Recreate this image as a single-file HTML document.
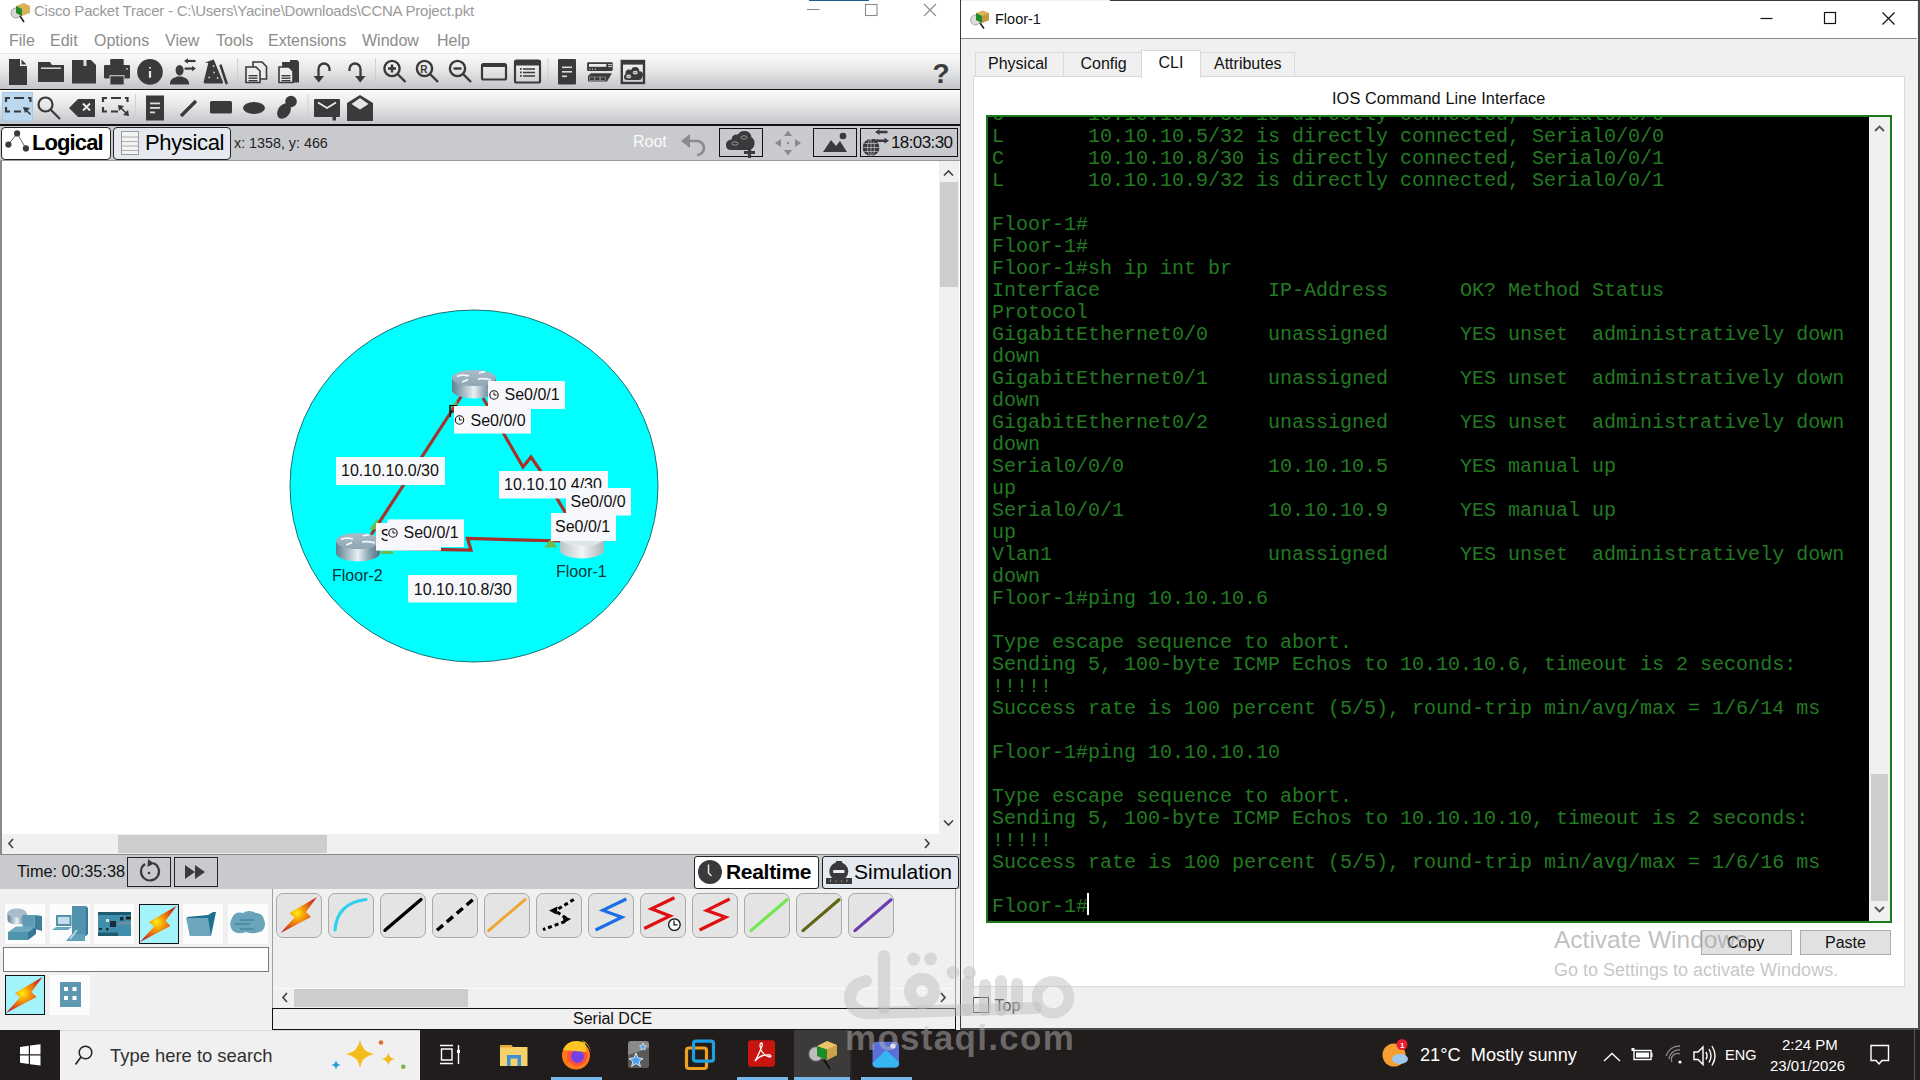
<!DOCTYPE html>
<html><head><meta charset="utf-8">
<style>
*{margin:0;padding:0;box-sizing:border-box}
html,body{width:1920px;height:1080px;overflow:hidden;background:#fff;font-family:"Liberation Sans",sans-serif}
.a{position:absolute}
.t{position:absolute;white-space:pre;line-height:1}
.tb{background:linear-gradient(#fbfbfb,#e6e7e8 45%,#c3c5c8)}
.ico{position:absolute}
</style></head><body>

<!-- ================= LEFT WINDOW ================= -->
<div class="a" id="lw" style="left:0;top:0;width:960px;height:1030px;background:#fff;overflow:hidden">
  <!-- title -->
  <div class="a" style="left:809px;top:0;width:60px;height:1px;background:#1f5f8b"></div>
  <div class="t" style="left:34px;top:3px;font-size:15px;letter-spacing:-0.22px;color:#9a9a9a">Cisco Packet Tracer - C:\Users\Yacine\Downloads\CCNA Project.pkt</div>
  <!-- menu -->
  <div class="t" style="left:9px;top:33px;font-size:16px;color:#8c8c8c;word-spacing:0">File</div>
  <div class="t" style="left:50px;top:33px;font-size:16px;color:#8c8c8c">Edit</div>
  <div class="t" style="left:94px;top:33px;font-size:16px;color:#8c8c8c">Options</div>
  <div class="t" style="left:165px;top:33px;font-size:16px;color:#8c8c8c">View</div>
  <div class="t" style="left:216px;top:33px;font-size:16px;color:#8c8c8c">Tools</div>
  <div class="t" style="left:268px;top:33px;font-size:16px;color:#8c8c8c">Extensions</div>
  <div class="t" style="left:362px;top:33px;font-size:16px;color:#8c8c8c">Window</div>
  <div class="t" style="left:437px;top:33px;font-size:16px;color:#8c8c8c">Help</div>
  <div class="a" style="left:0;top:53px;width:960px;height:1px;background:#e8e8e8"></div>
  <!-- toolbar 1 -->
  <div class="a tb" style="left:0;top:54px;width:960px;height:35px"></div>
  <div class="a" style="left:0;top:89px;width:960px;height:1px;background:#111"></div>
  <!-- toolbar 2 -->
  <div class="a tb" style="left:0;top:90px;width:960px;height:34px"></div>
  <div class="a" style="left:0;top:124px;width:960px;height:2px;background:#111"></div>
  <!-- tab bar -->
  <div class="a" style="left:0;top:126px;width:960px;height:34px;background:#c9cacd"></div>
  <div class="a" style="left:0;top:160px;width:960px;height:1px;background:#9a9a9a"></div>
  <!-- canvas -->
  <div class="a" style="left:0;top:161px;width:939px;height:673px;background:#fff;border-left:2px solid #8a8a8a"></div>
  <!-- vscroll -->
  <div class="a" style="left:939px;top:161px;width:20px;height:673px;background:#f0f0f0"></div>
  <div class="a" style="left:940px;top:182px;width:18px;height:105px;background:#cdcdcd"></div>
  <!-- hscroll -->
  <div class="a" style="left:0;top:834px;width:959px;height:20px;background:#f0f0f0;border-left:2px solid #8a8a8a"></div>
  <div class="a" style="left:118px;top:835px;width:209px;height:18px;background:#cdcdcd"></div>
  <div class="a" style="left:0;top:854px;width:960px;height:1px;background:#8a8a8a"></div>
  <!-- time bar -->
  <div class="a" style="left:0;top:855px;width:960px;height:34px;background:#c9cacd"></div>
  <!-- bottom panel -->
  <div class="a" style="left:0;top:889px;width:960px;height:141px;background:#f0f0f0"></div>
  <div class="a" style="left:272px;top:889px;width:1px;height:120px;background:#a0a0a0"></div>
  <div class="a" style="left:955px;top:889px;width:1px;height:141px;background:#a0a0a0"></div>
  
  
  <!-- DIAGRAM -->
  <svg class="a" style="left:0;top:161px" width="939" height="673" viewBox="0 161 939 673" font-family="Liberation Sans" font-size="16">
    <defs>
      <linearGradient id="rside" x1="0" x2="1" y1="0" y2="0">
        <stop offset="0" stop-color="#5f7f90"/><stop offset="0.25" stop-color="#9fb7c4"/><stop offset="0.5" stop-color="#e8f0f4"/><stop offset="0.75" stop-color="#8aa4b2"/><stop offset="1" stop-color="#4f6f80"/>
      </linearGradient>
      <linearGradient id="rtop" x1="0" x2="0" y1="0" y2="1">
        <stop offset="0" stop-color="#a9bdc8"/><stop offset="1" stop-color="#8ea6b3"/>
      </linearGradient>
      <linearGradient id="rside2" x1="0" x2="1" y1="0" y2="0">
        <stop offset="0" stop-color="#b8c4c8"/><stop offset="0.5" stop-color="#f2f5f6"/><stop offset="1" stop-color="#aab6ba"/>
      </linearGradient>
      <g id="router">
        <path d="M0 8 V20 A22 8.5 0 0 0 44 20 V8 Z" fill="url(#rside)"/>
        <ellipse cx="22" cy="8" rx="22" ry="8" fill="url(#rtop)"/>
        <path d="M5 6.5 Q10 4 17 6 M27 3 Q31 1.5 33 2 M26 9 Q32 8 39 10 M10 12 Q14 10.5 16 9.5" stroke="#f4f8fa" stroke-width="1.6" fill="none"/>
      </g>
      <g id="clk"><circle cx="0" cy="0" r="4.2" fill="none" stroke="#111" stroke-width="1.1"/><path d="M0 -2.6 V0 H2.4" stroke="#111" stroke-width="1" fill="none"/></g>
    </defs>
    <ellipse cx="474" cy="486" rx="184" ry="176" fill="#00ffff" stroke="#1c6f6f" stroke-width="1"/>
    <g fill="none" stroke="#a4322b" stroke-width="3.2" stroke-linejoin="miter">
      <path d="M466 389 L371 535"/>
      <path d="M483 398 L523 467 L531 457 L540 470 L568 517"/>
      <path d="M358 548 L471 550 L467.5 538.5 L582 541.5"/>
    </g>
    <g fill="#6cbd4f">
      <path d="M450 407 L456.5 400.5 L457.5 407 Z"/>
      <path d="M369 529.5 L377.5 518.5 L379 529.5 Z"/>
      <path d="M381 551 L393 551 L393 554 L381 554 Z"/>
      <path d="M544 547.5 L551 539 L557.5 547.5 Z"/>
    </g>
    <use href="#router" x="452" y="370"/>
    <use href="#router" x="336" y="533"/>
    <g transform="translate(560,530)">
      <path d="M0 8 V20 A22 8.5 0 0 0 44 20 V8 Z" fill="url(#rside2)"/>
      <ellipse cx="22" cy="8" rx="22" ry="8" fill="#dfe6e8"/>
    </g>
    <text x="448" y="417" fill="#111">F</text>
    <g fill="#f7f8fb">
      <rect x="336" y="457" width="109" height="28"/>
      <rect x="488" y="381" width="77" height="28"/>
      <rect x="454" y="406" width="77" height="27.6"/>
      <rect x="499" y="471" width="109" height="27.5"/>
    </g>
    <g fill="#111">
      <text x="341" y="475.5">10.10.10.0/30</text>
      <text x="504.5" y="399.5">Se0/0/1</text>
      <text x="470.5" y="425.5">Se0/0/0</text>
      <text x="504" y="490">10.10.10.4/30</text>
    </g>
    <use href="#clk" x="494" y="395"/>
    <use href="#clk" x="459.5" y="420"/>
    <g fill="#f7f8fb">
      <rect x="566" y="488" width="65" height="27.5"/>
      <rect x="551" y="513" width="65" height="28"/>
      <rect x="376" y="523" width="65" height="27.6"/>
    </g>
    <text x="570.5" y="507" fill="#111">Se0/0/0</text>
    <text x="555" y="532.2" fill="#111">Se0/0/1</text>
    <text x="380.5" y="541" fill="#111">S</text>
    <rect x="387.5" y="519.4" width="76.5" height="27.6" fill="#f7f8fb"/>
    <text x="403.5" y="537.5" fill="#111">Se0/0/1</text>
    <use href="#clk" x="393" y="533"/>
    <rect x="408" y="575" width="109" height="27.5" fill="#f7f8fb"/>
    <text x="413.8" y="594.5" fill="#111">10.10.10.8/30</text>
    <text x="332" y="581" fill="#0d3535">Floor-2</text>
    <text x="556" y="576.5" fill="#0d3535">Floor-1</text>
  </svg>

  <!-- BOTTOM PANEL -->
  <div class="t" style="left:17px;top:863px;font-size:16.3px;color:#111">Time: 00:35:38</div>
  <div class="a" style="left:127px;top:857px;width:44px;height:30px;border:1.5px solid #222"></div>
  <div class="a" style="left:174px;top:857px;width:44px;height:30px;border:1.5px solid #222"></div>
  <div class="a" style="left:694px;top:856px;width:125px;height:33px;background:#fff;border:1.5px solid #222;border-radius:3px"></div>
  <div class="a" style="left:822px;top:856px;width:137px;height:33px;background:#e4e8ef;border:1.5px solid #222;border-radius:3px"></div>
  <div class="t" style="left:726px;top:861px;font-size:21px;font-weight:700;color:#000;letter-spacing:-0.3px">Realtime</div>
  <div class="t" style="left:854px;top:861px;font-size:21px;color:#000;letter-spacing:0px">Simulation</div>
  <!-- device tiles -->
  <div class="a" style="left:5px;top:904px;width:40px;height:40px;background:#fcfcfc"></div>
  <div class="a" style="left:50px;top:904px;width:40px;height:40px;background:#fcfcfc"></div>
  <div class="a" style="left:94px;top:904px;width:40px;height:40px;background:#fcfcfc"></div>
  <div class="a" style="left:139px;top:904px;width:40px;height:40px;background:#a2f4fa;border:1.5px solid #111"></div>
  <div class="a" style="left:183px;top:904px;width:40px;height:40px;background:#fcfcfc"></div>
  <div class="a" style="left:228px;top:904px;width:40px;height:40px;background:#fcfcfc"></div>
  <div class="a" style="left:3px;top:947px;width:266px;height:25px;background:#fff;border:1px solid #7a7a7a"></div>
  <div class="a" style="left:5px;top:975px;width:40px;height:40px;background:#a2f4fa;border:1.5px solid #111"></div>
  <div class="a" style="left:50px;top:975px;width:40px;height:40px;background:#fcfcfc"></div>
  <!-- cable buttons -->
  <div class="a" style="left:276px;top:893px;width:46px;height:45px;background:#e4e4e4;border:1px solid #a9a9a9;border-radius:7px"></div>
  <div class="a" style="left:328px;top:893px;width:46px;height:45px;background:#e4e4e4;border:1px solid #a9a9a9;border-radius:7px"></div>
  <div class="a" style="left:380px;top:893px;width:46px;height:45px;background:#e4e4e4;border:1px solid #a9a9a9;border-radius:7px"></div>
  <div class="a" style="left:432px;top:893px;width:46px;height:45px;background:#e4e4e4;border:1px solid #a9a9a9;border-radius:7px"></div>
  <div class="a" style="left:484px;top:893px;width:46px;height:45px;background:#e4e4e4;border:1px solid #a9a9a9;border-radius:7px"></div>
  <div class="a" style="left:536px;top:893px;width:46px;height:45px;background:#e4e4e4;border:1px solid #a9a9a9;border-radius:7px"></div>
  <div class="a" style="left:588px;top:893px;width:46px;height:45px;background:#e4e4e4;border:1px solid #a9a9a9;border-radius:7px"></div>
  <div class="a" style="left:640px;top:893px;width:46px;height:45px;background:#e4e4e4;border:1px solid #a9a9a9;border-radius:7px"></div>
  <div class="a" style="left:692px;top:893px;width:46px;height:45px;background:#e4e4e4;border:1px solid #a9a9a9;border-radius:7px"></div>
  <div class="a" style="left:744px;top:893px;width:46px;height:45px;background:#e4e4e4;border:1px solid #a9a9a9;border-radius:7px"></div>
  <div class="a" style="left:796px;top:893px;width:46px;height:45px;background:#e4e4e4;border:1px solid #a9a9a9;border-radius:7px"></div>
  <div class="a" style="left:848px;top:893px;width:46px;height:45px;background:#e4e4e4;border:1px solid #a9a9a9;border-radius:7px"></div>
  <!-- cable hscroll -->
  <div class="a" style="left:273px;top:988px;width:682px;height:20px;background:#f0f0f0;border-top:1px solid #fafafa"></div>
  <div class="a" style="left:294px;top:989px;width:174px;height:18px;background:#cdcdcd"></div>
  <div class="a" style="left:272px;top:1008px;width:684px;height:22px;background:#f0f0f0;border:1.5px solid #111"></div>
  <div class="t" style="left:573px;top:1011px;font-size:16px;color:#111">Serial DCE</div>
  <svg class="a" style="left:0;top:830px" width="960" height="200" viewBox="0 830 960 200">
    <defs>
      <radialGradient id="bolt" cx="0.45" cy="0.45" r="0.6">
        <stop offset="0" stop-color="#ffef10"/><stop offset="0.35" stop-color="#f59a08"/><stop offset="1" stop-color="#c81e1e"/>
      </radialGradient>
      <path id="boltp" d="M37 1.5 L9.5 17.5 L14.5 22 L0.5 37.5 L31 21.5 L26 16.5 Z" fill="url(#bolt)"/>
    </defs>
    <!-- scroll arrows -->
    <g fill="none" stroke="#444" stroke-width="1.7">
      <path d="M13 839 L9 843.5 L13 848"/>
      <path d="M925 839 L929 843.5 L925 848"/>
      
      <path d="M287 993 L283 997.5 L287 1002"/>
      <path d="M941 993 L945 997.5 L941 1002"/>
    </g>
    <!-- time bar buttons -->
    <g fill="none" stroke="#3a3a3c" stroke-width="2.2"><path d="M145 864 A9 9 0 1 0 153 863"/></g>
    <path d="M148 859 L154 863.5 L147.5 867 Z" fill="#3a3a3c"/><circle cx="149" cy="873" r="1.3" fill="#3a3a3c"/>
    <path d="M185 865 L195 872 L185 879 Z M195 865 L205 872 L195 879 Z" fill="#3a3a3c"/>
    <circle cx="710" cy="872" r="12" fill="#3a3a3c"/><path d="M708.5 864.5 V873 L711.5 876" stroke="#eee" stroke-width="1.4" fill="none"/>
    <circle cx="838.8" cy="871.4" r="9.5" fill="#3a3a3c"/><rect x="836" y="861" width="6" height="5" fill="#3a3a3c"/>
    <rect x="826" y="878" width="26" height="6" fill="#3a3a3c"/><rect x="833.2" y="870" width="11.2" height="3" fill="#e8ecf2"/>
    <path d="M830.5 879.5 V882 M836 880.5 V882 M841.5 880.5 V882 M847 879.5 V882" stroke="#999" stroke-width="1"/>
    <!-- device category icons -->
    <g fill="#4f93ad">
      <path d="M7.5 913 V920 A9.5 4.5 0 0 0 26.5 920 V913 Z" fill="url(#rside)"/><ellipse cx="17" cy="913" rx="9.5" ry="4.5" fill="#a9bdc8"/>
      <rect x="22.5" y="915" width="12" height="14" fill="#5e9ab2"/><path d="M34.5 915 L42 916 V931 L34.5 929 Z" fill="#3f7f99"/>
      <path d="M8 932 L16 926.5 H36 L28 932 Z" fill="#6aa8c0"/><path d="M8 932 H28 V940 H8 Z" fill="#4f93ad"/><path d="M28 932 L36 926.5 V934 L28 940 Z" fill="#37789a"/>
      <rect x="56" y="915" width="15.5" height="11" fill="#4f93ad"/><rect x="58" y="917" width="11.5" height="7" fill="#c4dde8"/><path d="M52 930 L56 927 H72 L68 930 Z" fill="#6aa8c0"/>
      <rect x="72" y="906" width="14" height="30" fill="#4f93ad"/><path d="M86 906 L88 908 V934 L86 936 Z" fill="#37789a"/>
      <path d="M66 941 L72 934 H85 V941 Z" fill="#5fa3bb"/><path d="M70 939 L77 930" stroke="#c4dde8" stroke-width="1.5"/>
      <rect x="98" y="912" width="33" height="24" fill="#3f8fac"/><rect x="98" y="912" width="33" height="3" fill="#1f5a6e"/><rect x="98" y="932.5" width="20" height="3.5" fill="#1f5a6e"/>
      <rect x="110" y="921" width="6" height="6" fill="#1c2c3c"/><rect x="120" y="917" width="3.5" height="3.5" fill="#1c2c3c"/><rect x="126" y="916.5" width="5" height="3" fill="#222"/>
      <rect x="118" y="922" width="13" height="2.5" fill="#7090a0"/><rect x="106" y="919" width="3" height="3" fill="#ddd"/><rect x="99" y="928" width="3" height="2" fill="#1c2c3c"/><rect x="106" y="928" width="2.5" height="2.5" fill="#1c2c3c"/>
      <path d="M187 917 L208 915 L213 912 H216 L211 936 H190 Z" fill="#1f708f"/><path d="M186 918 H208 L211 936 H190 Z" fill="#6ea6bd"/>
      <path d="M232 918 Q235 911 243 913 Q249 909 256 913 Q263 913 264 920 Q267 926 262 931 Q254 935 246 932 Q238 935 233 931 Q228 925 232 918 Z" fill="#6aa4bb"/>
      <path d="M240 920 H254 M235 924 H250 M240 929 H254" stroke="#4a88a2" stroke-width="1.6"/>
      <rect x="60" y="982" width="21" height="25" fill="#5d97b0"/>
      <rect x="64" y="987" width="4" height="4" fill="#fff"/><rect x="72.5" y="987" width="4" height="4" fill="#fff"/><rect x="64" y="996" width="4" height="4" fill="#fff"/><rect x="72.5" y="996" width="4" height="4" fill="#fff"/>
    </g>
    <use href="#boltp" x="139.5" y="904.5"/>
    <use href="#boltp" x="5.5" y="975.5"/>
    <use href="#boltp" x="280" y="895.5"/>
    <!-- cable icons -->
    <path d="M335 930 Q337 903 366 899.5" fill="none" stroke="#2fd0ec" stroke-width="3.2" stroke-linecap="round"/>
    <path d="M385 930.3 L421 899.5" stroke="#000" stroke-width="3.4" stroke-linecap="round"/>
    <path d="M437 930.3 L473 899.5" stroke="#000" stroke-width="3.4" stroke-dasharray="8 5"/>
    <path d="M488.5 930.6 L525 899.7" stroke="#eea532" stroke-width="3" stroke-linecap="round"/>
    <path d="M573.8 899.5 L558 909 M557 912 L566 918 M565 921.5 L543 929.6" fill="none" stroke="#000" stroke-width="3" stroke-dasharray="4 3"/>
    <path d="M549 910.5 L557.5 906.5 L556.5 914.5 Z M571 919 L562.5 915.5 L564 923 Z" fill="#000"/>
    <path d="M626.3 899 L602.8 910.4 L621.9 917.3 L595.6 930" fill="none" stroke="#1c6fe6" stroke-width="3.2"/>
    <path d="M674.4 897.8 L651.4 908.8 L670 916 L644.3 928.5" fill="none" stroke="#e01010" stroke-width="3.2"/>
    <circle cx="674.4" cy="924.6" r="5.8" fill="#fff" stroke="#111" stroke-width="1.3"/><path d="M674 920.5 V924.8 H677.5" stroke="#111" stroke-width="1.2" fill="none"/>
    <path d="M729.7 899 L706.7 910.4 L725.8 917.3 L699.6 930" fill="none" stroke="#e01010" stroke-width="3.2"/>
    <path d="M751 930.6 L787 899.7" stroke="#72e84e" stroke-width="3.2" stroke-linecap="round"/>
    <path d="M803 930.6 L839 899.7" stroke="#626416" stroke-width="3.2" stroke-linecap="round"/>
    <path d="M855 930.6 L891 899.7" stroke="#6a3cb0" stroke-width="3.2" stroke-linecap="round"/>
  </svg>
<!-- TAB BAR -->
  <div class="a" style="left:1px;top:127px;width:110px;height:33px;background:#fff;border:1.5px solid #222;border-radius:4px"></div>
  <div class="a" style="left:113px;top:127px;width:118px;height:33px;background:#e5e8ee;border:1.5px solid #222;border-radius:4px"></div>
  <svg class="a" style="left:0;top:120px" width="240" height="40" viewBox="0 120 240 40">
    <path d="M8.4 144.6 L17.1 133.4 L25.9 148.4" fill="none" stroke="#555" stroke-width="0.9"/>
    <circle cx="8.4" cy="144.6" r="3.1" fill="#3a3a3c"/><circle cx="17.1" cy="133.4" r="3.1" fill="#3a3a3c"/><circle cx="25.9" cy="148.4" r="3.1" fill="#3a3a3c"/>
    <rect x="121.5" y="131.5" width="17" height="23" fill="#f4f4f4" stroke="#9a9a9a" stroke-width="1"/>
    <path d="M121.5 137 H138.5 M121.5 141.5 H138.5 M121.5 146 H138.5 M121.5 150.5 H138.5" stroke="#9a9a9a" stroke-width="0.8"/>
  </svg>
  <div class="t" style="left:32px;top:132px;font-size:22px;font-weight:700;color:#000;letter-spacing:-0.9px">Logical</div>
  <div class="t" style="left:145px;top:132px;font-size:22px;color:#000;letter-spacing:-0.35px">Physical</div>
  <div class="t" style="left:234px;top:136px;font-size:14.3px;color:#222">x: 1358, y: 466</div>
  <div class="t" style="left:633px;top:134px;font-size:16px;color:#fafafa">Root</div>
  <div class="a" style="left:719px;top:128px;width:44px;height:29px;border:1.5px solid #111"></div>
  <div class="a" style="left:813px;top:128px;width:44px;height:29px;border:1.5px solid #111"></div>
  <div class="a" style="left:860px;top:128px;width:98px;height:29px;border:1.5px solid #111"></div>
  <div class="t" style="left:891px;top:134px;font-size:17px;color:#111;letter-spacing:-0.6px">18:03:30</div>
  <svg class="a" style="left:670px;top:126px" width="290" height="34" viewBox="670 126 290 34">
    <path d="M688 141 H697 A7 7 0 0 1 697 155" fill="none" stroke="#8a8a8c" stroke-width="2.6"/>
    <path d="M681 141 L690 134 V148 Z" fill="#8a8a8c"/>
    <path d="M731 150 Q726 150 726 145 Q726 140 731.5 139.5 Q732 134 738 134.5 Q740 130.5 745 131 Q751 131.5 751.5 137.5 Q755 139 754.5 144 Q754 149 749 150 Z" fill="#3a3a3c"/>
    <ellipse cx="744" cy="137.5" rx="3.2" ry="1.7" fill="none" stroke="#bbb" stroke-width="0.7"/><ellipse cx="735" cy="143.5" rx="3.2" ry="1.7" fill="none" stroke="#bbb" stroke-width="0.7"/>
    <path d="M744 152.5 H755 M749.5 147 V158" stroke="#3a3a3c" stroke-width="3.2"/>
    <path d="M788 130.5 L792 136 H784 Z M788 155.5 L792 150 H784 Z M775 143 L781 139 V147 Z M801 143 L795 139 V147 Z" fill="#8a8a8c"/><circle cx="788" cy="143" r="1.2" fill="#8a8a8c"/>
    <path d="M823 152 L831 140 L836 146 L840 141 L847 152 Z" fill="#3a3a3c"/><circle cx="843" cy="136" r="3.3" fill="#3a3a3c"/>
    <circle cx="871" cy="147.5" r="8.4" fill="#3a3a3c"/>
    <path d="M862.6 147.5 H879.4 M871 139 V156 M864.5 143.5 H877.5 M864.5 151.5 H877.5" stroke="#c9cacd" stroke-width="0.7" fill="none"/>
    <ellipse cx="871" cy="147.5" rx="3.5" ry="8.4" fill="none" stroke="#c9cacd" stroke-width="0.7"/>
    <path d="M878 132 H887.5 M877 140.8 H885" stroke="#3a3a3c" stroke-width="2.4"/>
    <path d="M875 132 L879.5 129 V135 Z M889 140.8 L884.5 137.8 V143.8 Z" fill="#3a3a3c"/>
    <path d="M872 139.5 Q873 140.8 878 140.8" stroke="#3a3a3c" stroke-width="2.4" fill="none"/>
  </svg>
<!-- ICONS SVG -->
  <svg class="a" style="left:0;top:0" width="960" height="1030" viewBox="0 0 960 1030">
   <g fill="#3a3a3c" stroke="none">
    <!-- app icon -->
    <g transform="translate(10,2)">
      <ellipse cx="6" cy="11" rx="5" ry="5" fill="#d8d8d8" stroke="#a0a0a0" stroke-width="1"/>
      <path d="M6 4 L14 1 L20 4 L20 11 L12 14 L6 11 Z" fill="#d9b25c"/>
      <path d="M6 4 L12 7 L12 14 L6 11 Z" fill="#1f8a2a"/>
      <path d="M10 14 L14 20" stroke="#222" stroke-width="1.6"/>
    </g>
    <!-- title buttons -->
    <path d="M807 9.5 H819.5" stroke="#8a8a8a" stroke-width="1.1"/>
    <rect x="865.5" y="4.5" width="11.5" height="11" fill="none" stroke="#8a8a8a" stroke-width="1.1"/>
    <path d="M924 4 L936 16 M936 4 L924 16" stroke="#8a8a8a" stroke-width="1.1"/>
    <path d="M944 175.5 L948.5 171 L953 175.5" fill="none" stroke="#444" stroke-width="1.7"/>
    <path d="M944 820.5 L948.5 825 L953 820.5" fill="none" stroke="#444" stroke-width="1.7"/>
    <!-- toolbar1 -->
    <path d="M9 59 H20 V66 H27 V85 H9 Z"/><path d="M21.5 59.5 L26.5 64.5 H21.5 Z"/>
    <path d="M38 62 H50 L52 65 H64 V82 H38 Z"/><rect x="41" y="67.5" width="20" height="1.4" fill="#e8e8e8"/>
    <path d="M72 60 H91 L96 65 V83.5 H72 Z"/><rect x="83.5" y="60" width="3" height="6" fill="#e0e0e0"/><rect x="77" y="60" width="13" height="7" fill="none" stroke="#e0e0e0" stroke-width="0"/>
    <rect x="110.2" y="59.1" width="13.5" height="6.5" rx="0.8"/>
    <path d="M105 65 H129 Q130 65 130 66 V77.4 Q130 78.4 129 78.4 H124.5 V75.2 H109.5 V78.4 H105 Q104 78.4 104 77.4 V66 Q104 65 105 65 Z"/>
    <rect x="110.4" y="76.2" width="13.3" height="8.4" rx="0.6"/><circle cx="127" cy="68.8" r="0.9" fill="#ddd"/>
    <circle cx="150" cy="71.9" r="12.8"/><rect x="148.9" y="71" width="2.2" height="6.7" fill="#e8e8e8"/><rect x="149.1" y="67" width="1.8" height="1.6" fill="#e8e8e8"/>
    <ellipse cx="179.6" cy="70.2" rx="4" ry="5.2"/><path d="M170 84.6 V83 Q170.5 78.5 175 77.5 L177 76.5 H182 L184 77.5 Q188.5 78.5 189 83 V84.6 Z"/>
    <path d="M186 61 H195.5" stroke="#3a3a3c" stroke-width="2.2"/><path d="M184 61 L188 58.3 V63.7 Z"/>
    <path d="M184.6 68.6 H194" stroke="#3a3a3c" stroke-width="2.2"/><path d="M196 68.6 L192 65.9 V71.3 Z"/>
    <path d="M213.8 59.5 L205 62.4 L208.3 63 L203.6 82 Q203.6 83.5 205 83.5 H222 Q223.3 83.5 223 82 Z"/>
    <path d="M220.7 65.7 L226.5 83.2" stroke="#3a3a3c" stroke-width="2.6" stroke-linecap="round"/>
    <g fill="#cfcfd2"><circle cx="213.6" cy="66" r="0.9"/><circle cx="214" cy="72.5" r="0.9"/><circle cx="209.2" cy="77.5" r="0.9"/><circle cx="217.6" cy="78" r="0.9"/></g>
    <rect x="237" y="58" width="1" height="30" fill="#d0d0d0"/>
    <g fill="#ececec" stroke="#3a3a3c" stroke-width="1.6"><path d="M253 62 H262 L266.5 66.5 V79 H253 Z"/><path d="M246 67 H256 L260 71 V82.5 H246 Z"/></g>
    <g fill="#3a3a3c"><rect x="248.5" y="75" width="9" height="1.4"/><rect x="248.5" y="77.5" width="9" height="1.4"/><rect x="248.5" y="80" width="9" height="1.4"/></g>
    <path d="M282 62 H290 V60 H297 L299 62 V82.5 H283 Z"/>
    <g fill="#ececec" stroke="#3a3a3c" stroke-width="1.6"><path d="M279 67 H289 L293 71 V82.5 H279 Z"/></g>
    <g fill="#3a3a3c"><rect x="281.5" y="75" width="9" height="1.4"/><rect x="281.5" y="77.5" width="9" height="1.4"/><rect x="281.5" y="80" width="9" height="1.4"/></g>
    <path d="M318.5 77 V69 A5.5 5.5 0 0 1 329.5 69 V71" fill="none" stroke="#3a3a3c" stroke-width="2.3"/><path d="M313.5 76 H324 L318.8 82.5 Z"/>
    <path d="M360.5 77 V69 A5.5 5.5 0 0 0 349.5 69 V71" fill="none" stroke="#3a3a3c" stroke-width="2.3"/><path d="M355 76 H365.5 L360.2 82.5 Z"/>
    <rect x="375" y="58" width="1" height="30" fill="#d0d0d0"/>
    <g fill="none" stroke="#3a3a3c" stroke-width="2.4"><circle cx="392" cy="68.5" r="7.6"/><path d="M397.5 74 L405.5 82"/>
    <circle cx="424.5" cy="68.5" r="7.6"/><path d="M430 74 L438 82"/>
    <circle cx="457.5" cy="68.5" r="7.6"/><path d="M463 74 L471 82"/></g>
    <path d="M388 68.5 H396 M392 64.5 V72.5" stroke="#3a3a3c" stroke-width="2.4"/>
    <path d="M453.5 68.5 H461.5" stroke="#3a3a3c" stroke-width="2.4"/>
    <text x="420.3" y="72.8" font-family="Liberation Sans" font-weight="700" font-size="10" fill="#3a3a3c">R</text>
    <rect x="482" y="64" width="24" height="15.5" rx="1.5" fill="none" stroke="#3a3a3c" stroke-width="2.2"/><rect x="482" y="64" width="24" height="3" />
    <rect x="515" y="60.5" width="25" height="22" rx="1.5" fill="none" stroke="#3a3a3c" stroke-width="2.2"/><rect x="515" y="60.5" width="25" height="5"/>
    <g stroke="#3a3a3c" stroke-width="1.6"><path d="M523 69 H535 M523 72.5 H535 M523 76 H535"/></g><rect x="520" y="68" width="1.6" height="1.8"/><rect x="520" y="71.5" width="1.6" height="1.8"/><rect x="520" y="75" width="1.6" height="1.8"/>
    <rect x="547.5" y="58" width="1" height="30" fill="#d0d0d0"/>
    <rect x="558" y="59" width="18" height="25.5" rx="1"/><g fill="#dcdcdc"><rect x="562" y="66.5" width="10" height="1.6"/><rect x="562" y="71" width="10" height="1.6"/><rect x="562" y="75.5" width="5" height="1.6"/></g>
    <rect x="587.1" y="62.2" width="25.6" height="8.8" rx="1.2"/><rect x="589" y="64" width="17.3" height="2.8" fill="#ececec"/>
    <path d="M608 64.6 H612 M608 66.6 H612" stroke="#ececec" stroke-width="0.8"/>
    <g fill="#d8d8d8"><circle cx="589.8" cy="69.2" r="0.6"/><circle cx="592.6" cy="69.2" r="0.6"/><circle cx="595.5" cy="69.2" r="0.6"/></g>
    <path d="M591 73.2 H611.5 V74 L607 81.6 H589 Q588 81.6 588 80.6 V76 Z"/>
    <g fill="#3a3a3c" stroke="#aaa" stroke-width="0.6"><rect x="589.3" y="77" width="5" height="3.5"/><rect x="594.8" y="77" width="5" height="3.5"/><rect x="600.3" y="77" width="5" height="3.5"/></g>
    <rect x="621.8" y="61" width="22.2" height="22" fill="none" stroke="#3a3a3c" stroke-width="2.4"/><rect x="621" y="60" width="24" height="4.6"/>
    <circle cx="635.2" cy="71" r="4"/><circle cx="629" cy="73" r="3.5"/><circle cx="639.5" cy="74.8" r="3.5"/>
    <rect x="624" y="74" width="18" height="6" rx="3"/>
    <ellipse cx="635.3" cy="72.6" rx="2.6" ry="1.9" fill="#ddd"/><ellipse cx="628.7" cy="76.4" rx="2.6" ry="1.9" fill="#ddd"/>
    <path d="M633 72.6 H637.6 M626.4 76.4 H631" stroke="#555" stroke-width="0.6"/>
    <text x="932.5" y="83" font-family="Liberation Sans" font-weight="700" font-size="28" fill="#3a3a3c">?</text>
    <!-- toolbar 2 -->
    <rect x="2.5" y="92.5" width="30" height="28.5" fill="#bcd8f0" stroke="#a4c8e8" stroke-width="1"/>
    <g fill="none" stroke="#3a3a3c" stroke-width="2.2">
      <path d="M6 102 V98 H10 M14 98 H24 M28 98 H30.5 V102 M6 107 V111.5 H10 M14 111.5 H21"/>
      <path d="M103 102 V98 H107 M111 98 H121 M125 98 H127.5 V102 M103 107 V111.5 H107 M111 111.5 H118"/>
      <circle cx="45.5" cy="104.5" r="7"/><path d="M50.5 109.5 L60 119"/>
      <path d="M181 116 L196 101" stroke-width="3.4"/>
    </g>
    <path d="M24 108 L30.5 114.5" stroke="#3a3a3c" stroke-width="1.6"/><path d="M23 107 L30 108 L25 113 Z"/>
    <path d="M119 106 L128 115" stroke="#3a3a3c" stroke-width="1.6"/><path d="M118 105 L124 106 L119 111 Z"/><path d="M129 116 L123 115 L128 110 Z"/>
    <path d="M69 108 L78 99 H95 V117 H78 Z"/><path d="M83 103.5 L90 110.5 M90 103.5 L83 110.5" stroke="#ececec" stroke-width="1.8"/>
    <rect x="135" y="94" width="1" height="28" fill="#d0d0d0"/>
    <path d="M146 95.5 H164 V120.5 H146 Z"/><g fill="#dcdcdc"><rect x="150" y="102.5" width="10" height="1.8"/><rect x="150" y="107" width="10" height="1.8"/><rect x="150" y="111.5" width="5" height="1.8"/></g>
    <rect x="210" y="101" width="22" height="12.5" rx="1.5"/>
    <ellipse cx="254" cy="108" rx="11" ry="6"/>
    <circle cx="291" cy="101.5" r="5.8"/><ellipse cx="284" cy="111" rx="6" ry="8.5" transform="rotate(35 284 111)"/>
    <rect x="307.5" y="94" width="1" height="28" fill="#d0d0d0"/>
    <rect x="314" y="99" width="26" height="18" rx="1"/><rect x="332.5" y="116" width="3.5" height="4.5"/><path d="M318 102.5 L327 108 L336 102.5" fill="none" stroke="#ececec" stroke-width="1.6"/>
    <path d="M347 103 L360 95 L373 103 V121 H347 Z"/><path d="M351.5 104 L360 98 L368.5 104 L360 109.5 Z" fill="#e8e8e8"/>
   </g>
  </svg>

</div>

<!-- ================= RIGHT WINDOW ================= -->

<div class="a" id="rw" style="left:960px;top:0;width:960px;height:1030px;background:#f0f0f0">
  <div class="a" style="left:0;top:0;width:1px;height:1030px;background:#3a3a3a"></div>
  <div class="a" style="left:150px;top:0;width:810px;height:1px;background:#3a3a3a"></div>
  <div class="a" style="left:958px;top:0;width:2px;height:1030px;background:#4a4a4a"></div>
  <div class="a" style="left:0;top:1028px;width:960px;height:2px;background:#4a4a4a"></div>
  <!-- title bar -->
  <div class="a" style="left:1px;top:1px;width:956px;height:37px;background:#fff"></div>
  <div class="a" style="left:1px;top:38px;width:956px;height:1px;background:#8a8a8a"></div>
  <svg class="a" style="left:10px;top:10px" width="20" height="20" viewBox="0 0 20 20">
    <ellipse cx="5.5" cy="10" rx="5" ry="5" fill="#dcdcdc" stroke="#a8a8a8" stroke-width="1"/>
    <path d="M6 3 L13 0.5 L19 3 L19 10 L12 13 L6 10 Z" fill="#d9b25c"/>
    <path d="M12 6 L19 3 L19 10 L12 13 Z" fill="#c49a40"/>
    <path d="M6 3 L12 6 L12 13 L6 10 Z" fill="#1f8a2a"/>
    <path d="M10 13 L14 18.5" stroke="#222" stroke-width="1.6"/>
  </svg>
  <div class="t" style="left:35px;top:12px;font-size:14.5px;color:#111">Floor-1</div>
  <svg class="a" style="left:790px;top:8px" width="150" height="22" viewBox="790 8 150 22">
    <path d="M800.5 18.5 H812.5" stroke="#111" stroke-width="1.2"/>
    <rect x="864.5" y="12.5" width="11" height="11" fill="none" stroke="#111" stroke-width="1.2"/>
    <path d="M922.5 12.5 L934.5 24.5 M934.5 12.5 L922.5 24.5" stroke="#111" stroke-width="1.2"/>
  </svg>
  <!-- tabs -->
  <div class="a" style="left:15px;top:52px;width:89px;height:25px;background:#f0f0f0;border:1px solid #d9d9d9;border-bottom:none"></div>
  <div class="a" style="left:104px;top:52px;width:78px;height:25px;background:#f0f0f0;border:1px solid #d9d9d9;border-left:none;border-bottom:none"></div>
  <div class="a" style="left:240px;top:52px;width:95px;height:25px;background:#f0f0f0;border:1px solid #d9d9d9;border-left:none;border-bottom:none"></div>
  <div class="a" style="left:13px;top:76px;width:932px;height:911px;background:#fff;border:1px solid #d9d9d9"></div>
  <div class="a" style="left:181px;top:50px;width:60px;height:28px;background:#fff;border:1px solid #d9d9d9;border-bottom:none"></div>
  <div class="t" style="left:28px;top:56px;font-size:16px;color:#111">Physical</div>
  <div class="t" style="left:120.5px;top:56px;font-size:16px;color:#111">Config</div>
  <div class="t" style="left:198.5px;top:55px;font-size:16px;color:#111">CLI</div>
  <div class="t" style="left:254px;top:56px;font-size:16px;color:#111">Attributes</div>
  <div class="t" style="left:372px;top:90px;font-size:16.3px;letter-spacing:0.1px;color:#111">IOS Command Line Interface</div>
  <!-- terminal -->
  <div class="a" style="left:26px;top:115px;width:906px;height:808px;background:#000;border:2px solid #1b7a1b;overflow:hidden">
    <pre style="position:absolute;left:4px;top:-13px;margin:0;font-family:'Liberation Mono',monospace;font-size:20px;line-height:22px;color:#237a23">C       10.10.10.4/30 is directly connected, Serial0/0/0
L       10.10.10.5/32 is directly connected, Serial0/0/0
C       10.10.10.8/30 is directly connected, Serial0/0/1
L       10.10.10.9/32 is directly connected, Serial0/0/1

Floor-1#
Floor-1#
Floor-1#sh ip int br
Interface              IP-Address      OK? Method Status
Protocol
GigabitEthernet0/0     unassigned      YES unset  administratively down
down
GigabitEthernet0/1     unassigned      YES unset  administratively down
down
GigabitEthernet0/2     unassigned      YES unset  administratively down
down
Serial0/0/0            10.10.10.5      YES manual up
up
Serial0/0/1            10.10.10.9      YES manual up
up
Vlan1                  unassigned      YES unset  administratively down
down
Floor-1#ping 10.10.10.6

Type escape sequence to abort.
Sending 5, 100-byte ICMP Echos to 10.10.10.6, timeout is 2 seconds:
!!!!!
Success rate is 100 percent (5/5), round-trip min/avg/max = 1/6/14 ms

Floor-1#ping 10.10.10.10

Type escape sequence to abort.
Sending 5, 100-byte ICMP Echos to 10.10.10.10, timeout is 2 seconds:
!!!!!
Success rate is 100 percent (5/5), round-trip min/avg/max = 1/6/16 ms

Floor-1#</pre>
    <div class="a" style="left:99px;top:776px;width:2px;height:22px;background:#fff"></div>
    <div class="a" style="left:881px;top:0;width:21px;height:804px;background:#f0f0f0"></div>
    <div class="a" style="left:883px;top:657px;width:17px;height:127px;background:#cdcdcd"></div>
    <svg class="a" style="left:881px;top:0" width="22" height="804" viewBox="0 0 22 804">
      <path d="M6 14 L10.5 9.5 L15 14" fill="none" stroke="#555" stroke-width="1.8"/>
      <path d="M6 790 L10.5 794.5 L15 790" fill="none" stroke="#555" stroke-width="1.8"/>
    </svg>
  </div>
  <!-- buttons -->
  <div class="a" style="left:741px;top:930px;width:91px;height:25px;background:#e1e1e1;border:1px solid #adadad"></div>
  <div class="a" style="left:840px;top:930px;width:91px;height:25px;background:#e1e1e1;border:1px solid #adadad"></div>
  <div class="t" style="left:767px;top:935px;font-size:16px;color:#111">Copy</div>
  <div class="t" style="left:865px;top:935px;font-size:16px;color:#111">Paste</div>
  <div class="t" style="left:594px;top:928px;font-size:24.5px;color:rgba(150,150,150,0.6)">Activate Windows</div>
  <div class="t" style="left:594px;top:961px;font-size:18px;color:rgba(160,160,160,0.6)">Go to Settings to activate Windows.</div>
  <!-- Top checkbox -->
  <div class="a" style="left:13px;top:997px;width:16px;height:16px;border:1px solid #333"></div>
  <div class="t" style="left:34.5px;top:997.5px;font-size:16px;color:#222">Top</div>
</div>

<!-- ================= TASKBAR ================= -->
<div class="a" id="tbar" style="left:0;top:1030px;width:1920px;height:50px;background:#221d1d">
  <div class="a" style="left:60px;top:0;width:360px;height:50px;background:#f0f0f0;border-top:1px solid #d8d8d8"></div>
  <div class="t" style="left:110px;top:17px;font-size:18.4px;color:#303030">Type here to search</div>
  <div class="a" style="left:794px;top:0;width:56px;height:50px;background:#3d3a3a"></div>
  <div class="a" style="left:850px;top:0;width:2px;height:50px;background:#2a2626"></div>
  <div class="a" style="left:551px;top:47px;width:51px;height:3px;background:#76b9ed"></div>
  <div class="a" style="left:737px;top:47px;width:51px;height:3px;background:#76b9ed"></div>
  <div class="a" style="left:794px;top:47px;width:56px;height:3px;background:#76b9ed"></div>
  <div class="a" style="left:861px;top:47px;width:51px;height:3px;background:#76b9ed"></div>
  <div class="a" style="left:1914px;top:0;width:1px;height:50px;background:#5a5656"></div>
  <div class="t" style="left:1420px;top:16px;font-size:18.2px;color:#fff">21°C  Mostly sunny</div>
  <div class="t" style="left:1725px;top:17.5px;font-size:14.5px;color:#fff">ENG</div>
  <div class="t" style="left:1782px;top:7px;font-size:15px;color:#fff">2:24 PM</div>
  <div class="t" style="left:1770px;top:28px;font-size:15px;color:#fff">23/01/2026</div>
  <svg class="a" style="left:0;top:0" width="1920" height="50" viewBox="0 1030 1920 50">
    <g fill="#fff">
      <path d="M20 1047 L28.8 1045.8 V1054.3 H20 Z"/><path d="M30 1045.6 L40.5 1044.2 V1054.3 H30 Z"/>
      <path d="M20 1055.5 H28.8 V1064 L20 1062.8 Z"/><path d="M30 1055.5 H40.5 V1065.6 L30 1064.2 Z"/>
    </g>
    <circle cx="85.5" cy="1052.5" r="6.3" fill="none" stroke="#222" stroke-width="1.5"/><path d="M81 1057 L75.5 1064.5" stroke="#222" stroke-width="1.6"/>
    <path d="M360 1040 Q362 1052 374 1054 Q362 1056 360 1068 Q358 1056 346 1054 Q358 1052 360 1040 Z" fill="#f2bd1c"/>
    <path d="M388.3 1052.5 Q389 1058 395 1059 Q389 1060 388.3 1065.5 Q387.5 1060 381.5 1059 Q387.5 1058 388.3 1052.5 Z" fill="#f2bd1c"/>
    <path d="M336 1060 Q336.5 1064.5 341 1065 Q336.5 1065.5 336 1070 Q335.5 1065.5 331 1065 Q335.5 1064.5 336 1060 Z" fill="#2a9ad8"/>
    <circle cx="381" cy="1042.5" r="2.3" fill="#e06a3a"/><circle cx="403.3" cy="1066.7" r="2.3" fill="#7ab648"/>
    <g fill="none" stroke="#fff" stroke-width="1.4">
      <path d="M440 1045.5 H453 M440 1063.5 H453 M441.5 1049 H452 V1060 H441.5 Z M458.5 1045 V1064"/>
    </g>
    <rect x="457" y="1050" width="3" height="3" fill="#fff"/>
    <path d="M500 1045 H511 L513 1047 H527.5 V1066 H500 Z" fill="#f7d26b"/><path d="M500 1045 H511 L513 1047.5 H500 Z" fill="#e0a83a"/>
    <path d="M507 1066 V1055 H521 V1066 H517.5 V1058.5 H510.5 V1066 Z" fill="#3f8fd6"/>
    <circle cx="576" cy="1055.5" r="14" fill="#ff7a1a"/><circle cx="577" cy="1056" r="10" fill="#ff4f3a"/><circle cx="577.5" cy="1056.5" r="6.5" fill="#7542e5"/>
    <path d="M563 1050 Q566 1041 577 1041 Q588 1041 591 1052 Q589 1043 582 1040 Q588 1046 586 1052 Z" fill="#ffc526"/>
    <rect x="628" y="1041" width="21" height="27" rx="3" fill="#8a8a8a"/><path d="M628 1055 L649 1048 V1065 Q649 1068 646 1068 H631 Q628 1068 628 1065 Z" fill="#5a5a5a"/>
    <path d="M636 1053 L638 1058 L643 1058.5 L639 1061.5 L640.5 1066.5 L636 1063.5 L631.5 1066.5 L633 1061.5 L629 1058.5 L634 1058 Z" fill="#49a0f0" stroke="#fff" stroke-width="0.8"/>
    <path d="M643 1043 L644 1045.5 L646.5 1046 L644.5 1047.5 L645 1050 L643 1048.7 L641 1050 L641.5 1047.5 L639.5 1046 L642 1045.5 Z" fill="#49a0f0" stroke="#fff" stroke-width="0.6"/>
    <rect x="686.5" y="1048" width="20" height="20.5" rx="2.5" fill="none" stroke="#f0a020" stroke-width="3.2"/>
    <rect x="693.5" y="1041.2" width="20" height="20" rx="2.5" fill="none" stroke="#1e9fe0" stroke-width="3.2"/>
    <rect x="748" y="1040.3" width="27" height="26.4" rx="3" fill="#c8150f"/>
    <path d="M755 1061 Q760 1052 762 1046 Q763 1043 761 1043 Q759 1044 761 1050 Q764 1056 770 1057 Q772 1056.5 770 1055 Q764 1054 758 1058 Q755 1061 755 1061 Z" fill="none" stroke="#fff" stroke-width="1.3"/>
    <g transform="translate(808,1038)">
      <ellipse cx="8" cy="16" rx="7" ry="7" fill="#bdbdbd" stroke="#8a8a8a" stroke-width="1"/>
      <path d="M9 8 L19 3 L29 7 L29 17 L19 22 L9 18 Z" fill="#e8c46a"/>
      <path d="M19 11 L29 7 L29 17 L19 22 Z" fill="#cca24a"/>
      <path d="M9 8 L19 11.5 L19 22 L9 18 Z" fill="#1f8a2a"/>
      <path d="M16 22 L22 31" stroke="#111" stroke-width="2"/>
    </g>
    <path d="M872.5 1046 Q872.5 1041.7 877 1041.7 H894.5 Q899 1041.7 899 1046 V1063 Q899 1067.5 894.5 1067.5 H877 Q872.5 1067.5 872.5 1063 Z" fill="#5a6fd8"/>
    <path d="M872.5 1063 L886 1050 L899 1062 V1063 Q899 1067.5 894.5 1067.5 H877 Q872.5 1067.5 872.5 1063 Z" fill="#35b6f0"/>
    <circle cx="893" cy="1046" r="2.6" fill="#fff"/>
    <circle cx="1394" cy="1055" r="11.5" fill="#f5a030"/><ellipse cx="1400" cy="1059" rx="8" ry="5" fill="#9fc8f0"/>
    <circle cx="1402" cy="1044.5" r="5.5" fill="#e81c2c"/>
    <text x="1400" y="1048.2" font-family="Liberation Sans" font-size="8" font-weight="700" fill="#fff">1</text>
    <g fill="none" stroke="#fff" stroke-width="1.4">
      <path d="M1604 1061 L1612 1053.5 L1620 1061"/>
      <rect x="1634" y="1050.5" width="17" height="9" />
      <path d="M1694 1052 H1698 L1703 1047 V1064.5 L1698 1059.5 H1694 Z"/>
      <path d="M1706 1052 Q1708 1055.7 1706 1059.5 M1709 1049 Q1713 1055.7 1709 1062.5 M1712 1046 Q1718 1055.7 1712 1065.5"/>
      <path d="M1871 1045.5 H1888.5 V1060.5 H1882 L1879 1064 L1876 1060.5 H1871 Z"/>
    </g>
    <rect x="1636" y="1052.5" width="13" height="5" fill="#fff"/><rect x="1631.5" y="1048" width="3" height="3" fill="#fff"/><rect x="1651" y="1053" width="1.5" height="4" fill="#fff"/>
    <g fill="none" stroke="#8a8a8a" stroke-width="1.3">
      <path d="M1666 1056 A14 14 0 0 1 1680 1046 M1669 1059 A10 10 0 0 1 1680 1050 M1672 1062 A6 6 0 0 1 1680 1054"/>
    </g>
    <circle cx="1680" cy="1062" r="1.6" fill="#fff"/>
  </svg>
</div>


<!-- WATERMARK -->
<svg class="a" style="left:820px;top:940px" width="270" height="140" viewBox="820 940 270 140">
  <g fill="none" stroke="rgba(188,188,188,0.47)" stroke-width="12" stroke-linecap="round">
    <path d="M884 956 V1008"/>
    <path d="M866 981 Q849 985 850 1000 Q853 1014 872 1013 L1036 1008"/>
    <circle cx="922" cy="991" r="12"/>
    <circle cx="1053" cy="997.3" r="16" stroke-width="10.5"/>
    <path d="M968 982 V1010 M985 985 V1010 M1001 981 V1010 M1017 984 V1005"/>
  </g>
  <g fill="rgba(188,188,188,0.47)">
    <circle cx="913.5" cy="959" r="6.5"/><circle cx="930.5" cy="959" r="6.5"/>
    <circle cx="953" cy="972.5" r="6.5"/><circle cx="969.5" cy="972.5" r="6.5"/>
  </g>
  <text x="845" y="1049.7" font-family="Liberation Sans" font-weight="700" font-size="35" letter-spacing="1.3" fill="rgba(188,188,188,0.47)">mostaql.com</text>
</svg>
</body></html>
